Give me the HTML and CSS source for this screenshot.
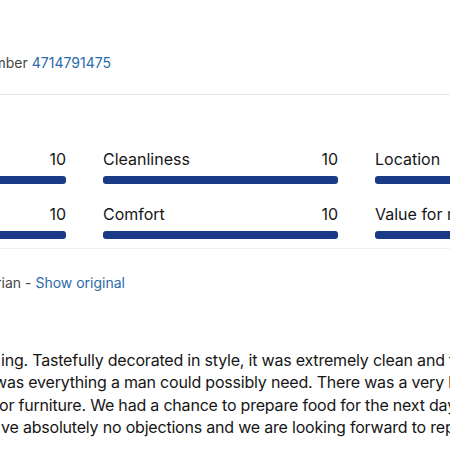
FILE: index.html
```html
<!doctype html>
<html lang="en">
<head>
  <meta charset="UTF-8">
  <title>Guest review</title>

  <link rel="stylesheet" href="styles.css">

</head>
<body>

  <div id="reviewPage">

    <div class="bookingLine">
      <span class="muted">Booking number</span>
      <a class="link" href="#">4714791475</a>
    </div>

    <div class="scoresPanel">
      <div class="scores">
        <div class="score">
          <div class="scoreHead"><span>Staff</span><span>10</span></div>
          <div class="bar"></div>
        </div>
        <div class="score">
          <div class="scoreHead"><span>Cleanliness</span><span>10</span></div>
          <div class="bar"></div>
        </div>
        <div class="score">
          <div class="scoreHead"><span>Location</span><span>10</span></div>
          <div class="bar"></div>
        </div>
        <div class="score">
          <div class="scoreHead"><span>Facilities</span><span>10</span></div>
          <div class="bar"></div>
        </div>
        <div class="score">
          <div class="scoreHead"><span>Comfort</span><span>10</span></div>
          <div class="bar"></div>
        </div>
        <div class="score">
          <div class="scoreHead"><span>Value for money</span><span>10</span></div>
          <div class="bar"></div>
        </div>
      </div>
    </div>

    <div class="translatedLine">
      <span class="muted">Translated from Hungarian -</span>
      <a class="link" href="#">Show original</a>
    </div>

    <div class="reviewText">
      <div class="line lineOne">ing. Tastefully decorated in style, it was extremely clean and tidy</div>
      <div class="line lineTwo">was everything a man could possibly need. There was a very large</div>
      <div class="line lineThree">or furniture. We had a chance to prepare food for the next day</div>
      <div class="line lineFour">ve absolutely no objections and we are looking forward to repeat</div>
    </div>

  </div>

</body>
</html>
```

FILE: styles.css
```css
html, body {
  margin: 0px;
  padding: 0px;
  background-color: #ffffff;
}

#reviewPage {
  width: 450px;
  height: 450px;
  overflow: hidden;
  font-family: Inter, "Liberation Sans", sans-serif;
  color: #161616;
}

.muted {
  color: #474747;
}

.link {
  color: #2c6aa8;
  text-decoration: none;
}

/* the page is a crop of a wider review card, so the small lines are
   pinned by their right end and spill off the left edge */
.bookingLine, .translatedLine {
  display: flex;
  justify-content: flex-end;
  gap: 4px;
  white-space: nowrap;
  font-size: 14px;
  line-height: 20px;
}

.bookingLine {
  width: 111px;
  padding-top: 53px;
  padding-bottom: 21px;
}

.scoresPanel {
  border-top: 1px solid #e6e6e6;
  border-bottom: 1px solid #f0f0f0;
  padding-top: 52px;
  padding-bottom: 9px;
}

.scores {
  display: grid;
  grid-template-columns: repeat(3, 235px);
  column-gap: 37px;
  row-gap: 18px;
  margin-left: -169px;
}

.scoreHead {
  display: flex;
  justify-content: space-between;
  font-size: 16px;
  line-height: 24px;
  white-space: nowrap;
}

.bar {
  height: 8px;
  margin-top: 5px;
  border-radius: 3px;
  background-color: #1a3a85;
}

.translatedLine {
  width: 125px;
  padding-top: 24px;
}

.reviewText {
  padding-top: 56px;
  font-size: 16px;
  line-height: 22.4px;
  letter-spacing: -0.2px;
  white-space: nowrap;
}

.lineOne { margin-left: 1px; }
.lineTwo { margin-left: -6px; }
.lineThree { margin-left: -1px; }
.lineFour { margin-left: 1px; }
```
